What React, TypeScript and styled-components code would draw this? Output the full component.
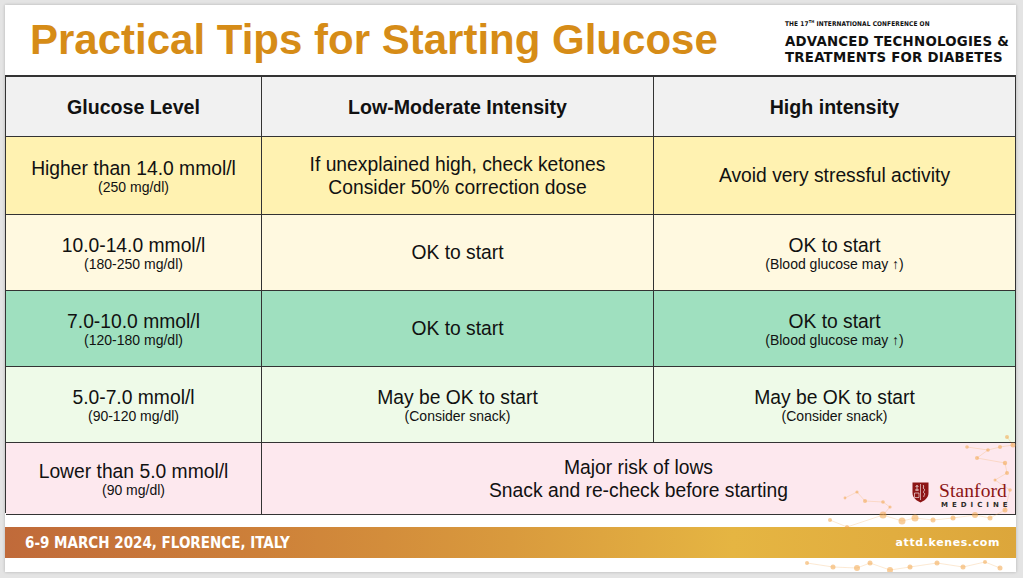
import React from "react";
import styled, { createGlobalStyle } from "styled-components";

const Global = createGlobalStyle`
  html, body { margin: 0; padding: 0; background: #e4e4e4; }
  body { font-family: "Liberation Sans", Arial, sans-serif; }
`;

const Page = styled.div`
  width: 1023px;
  height: 578px;
  padding: 5px 0 0 5px;
  box-sizing: border-box;
  background: #e4e4e4;
`;

const Slide = styled.div`
  position: relative;
  width: 1011px;
  height: 567px;
  background: #ffffff;
  box-shadow: 0 0 3px rgba(0, 0, 0, 0.22);
  display: flex;
  flex-direction: column;
  overflow: hidden;
`;

const Header = styled.div`
  height: 70px;
  display: flex;
  justify-content: space-between;
  align-items: flex-start;
  padding-left: 25px;
  box-sizing: border-box;
`;

const Title = styled.h1`
  margin: 0;
  padding-top: 11px;
  font: 700 42px/48px "Liberation Sans", Arial, sans-serif;
  color: #d68c17;
  letter-spacing: 0;
`;

const Conf = styled.div`
  display: flex;
  flex-direction: column;
  padding-top: 12px;
  margin-right: 9px;
  width: 222px;
  font-family: "DejaVu Sans Condensed", "DejaVu Sans", sans-serif;
  font-stretch: condensed;
  color: #111;
`;

const ConfSmall = styled.div`
  font-size: 6.5px;
  font-weight: 700;
  line-height: 9px;
  letter-spacing: 0.1px;
  margin-bottom: 4px;
`;

const ConfBig = styled.div`
  font-size: 14.8px;
  font-weight: 700;
  line-height: 16px;
  letter-spacing: 0.25px;
  white-space: nowrap;
`;

const Grid = styled.div`
  display: grid;
  grid-template-columns: 256px 392px 1fr;
  grid-template-rows: 60px 78px 76px 76px 76px 72px;
  border-top: 2px solid #333;
  border-left: 1.5px solid #333;
  box-sizing: border-box;
  height: 438px;
`;

const Cell = styled.div<{ $bg: string; $span?: number }>`
  background: ${(p) => p.$bg};
  grid-column: ${(p) => (p.$span ? `span ${p.$span}` : "auto")};
  border-right: 1.5px solid #333;
  border-bottom: 1.5px solid #333;
  display: flex;
  flex-direction: column;
  align-items: center;
  justify-content: center;
  text-align: center;
  color: #111;
  box-sizing: border-box;
`;

const HeadText = styled.div`
  font-size: 19.6px;
  font-weight: 700;
  line-height: 22px;
`;

const Main = styled.div`
  font-size: 19.3px;
  line-height: 23px;
`;

const Sub = styled.div`
  font-size: 14px;
  line-height: 15px;
`;

const Spacer = styled.div`
  height: 14px;
  flex: none;
`;

const Bar = styled.div`
  height: 31px;
  flex: none;
  display: flex;
  align-items: center;
  justify-content: space-between;
  padding: 0 16px 0 20px;
  background: linear-gradient(90deg, #c06a3a 0%, #cd8039 25%, #d99a3d 50%, #e5b542 72%, #e1ad3f 88%, #dca63b 100%);
  color: #fff;
  box-sizing: border-box;
`;

const Dates = styled.div`
  font-family: "DejaVu Sans Condensed", "DejaVu Sans", sans-serif;
  font-stretch: condensed;
  font-weight: 700;
  font-size: 15px;
  letter-spacing: 0;
`;

const Site = styled.div`
  font-family: "DejaVu Sans", sans-serif;
  font-weight: 700;
  font-size: 11px;
  letter-spacing: 0.6px;
`;

const Network = styled.svg`
  position: absolute;
  left: 790px;
  top: 425px;
  width: 221px;
  height: 142px;
  pointer-events: none;
`;

const Stanford = styled.div`
  position: absolute;
  left: 907px;
  top: 477px;
  display: flex;
  align-items: flex-start;
  gap: 10px;
`;

const StanfordText = styled.div`
  display: flex;
  flex-direction: column;
  align-items: flex-start;
`;

const StanfordName = styled.div`
  font-family: "Liberation Serif", "Times New Roman", serif;
  font-size: 19.5px;
  line-height: 18px;
  color: #8c1515;
  letter-spacing: 0.1px;
`;

const Medicine = styled.div`
  font-family: "DejaVu Sans", sans-serif;
  font-size: 7px;
  font-weight: 700;
  letter-spacing: 4px;
  line-height: 9px;
  color: #2e2d29;
  margin-left: 2px;
  margin-top: 1px;
`;

const dots: [number, number, number][] = [
  [1007, 437, 2], [1013, 445, 2.5], [1000, 447, 2], [988, 450, 1.8], [967, 447, 1.8],
  [977, 458, 2], [1005, 463, 2.2], [1007, 473, 2], [857, 492, 1.6], [865, 501, 2],
  [883, 502, 1.8], [890, 507, 1.6], [883, 515, 3.5], [902, 521, 3.5], [915, 518, 3.5],
  [933, 520, 2.5], [953, 518, 2.5], [975, 515, 3], [990, 518, 2.5], [1005, 510, 2.5],
  [830, 520, 2], [847, 527, 2], [807, 563, 2], [833, 567, 2.5], [857, 568, 3],
  [870, 563, 2.5], [890, 570, 3], [910, 567, 2.5], [937, 563, 2.5], [963, 567, 2.5],
  [985, 562, 2], [1000, 568, 2.5], [845, 498, 1.4], [1010, 490, 1.8], [995, 480, 1.5],
];

const links: [number, number][] = [
  [0, 1], [1, 2], [2, 3], [3, 4], [3, 5], [5, 6], [6, 7], [8, 9], [9, 10], [10, 11],
  [11, 12], [12, 13], [13, 14], [14, 15], [15, 16], [16, 17], [17, 18], [18, 19],
  [20, 21], [21, 12], [22, 23], [23, 24], [24, 25], [25, 26], [26, 27], [27, 28],
  [28, 29], [29, 30], [30, 31], [32, 8], [19, 33], [33, 34], [34, 7],
];

const rows = [
  { bg: "#fff2b1", lvl: "Higher than 14.0 mmol/l", mg: "(250 mg/dl)", low: ["If unexplained high, check ketones", "Consider 50% correction dose"], lowSub: "", high: "Avoid very stressful activity", highSub: "" },
  { bg: "#fff9e0", lvl: "10.0-14.0 mmol/l", mg: "(180-250 mg/dl)", low: ["OK to start"], lowSub: "", high: "OK to start", highSub: "(Blood glucose may \u2191)" },
  { bg: "#9fe0bf", lvl: "7.0-10.0 mmol/l", mg: "(120-180 mg/dl)", low: ["OK to start"], lowSub: "", high: "OK to start", highSub: "(Blood glucose may \u2191)" },
  { bg: "#eefae8", lvl: "5.0-7.0 mmol/l", mg: "(90-120 mg/dl)", low: ["May be OK to start"], lowSub: "(Consider snack)", high: "May be OK to start", highSub: "(Consider snack)" },
];

export default function App() {
  return (
    <Page>
      <Global />
      <Slide>
        <Header>
          <Title>Practical Tips for Starting Glucose</Title>
          <Conf>
            <ConfSmall>
              THE 17<sup style={{ fontSize: "4px" }}>TH</sup> INTERNATIONAL CONFERENCE ON
            </ConfSmall>
            <ConfBig>ADVANCED TECHNOLOGIES &amp;</ConfBig>
            <ConfBig>TREATMENTS FOR DIABETES</ConfBig>
          </Conf>
        </Header>
        <Grid>
          <Cell $bg="#f1f1f1"><HeadText>Glucose Level</HeadText></Cell>
          <Cell $bg="#f1f1f1"><HeadText>Low-Moderate Intensity</HeadText></Cell>
          <Cell $bg="#f1f1f1"><HeadText>High intensity</HeadText></Cell>
          {rows.map((r, i) => (
            <React.Fragment key={i}>
              <Cell $bg={r.bg}>
                <Main>{r.lvl}</Main>
                <Sub>{r.mg}</Sub>
              </Cell>
              <Cell $bg={r.bg}>
                {r.low.map((t) => (
                  <Main key={t}>{t}</Main>
                ))}
                {r.lowSub && <Sub>{r.lowSub}</Sub>}
              </Cell>
              <Cell $bg={r.bg}>
                <Main>{r.high}</Main>
                {r.highSub && <Sub>{r.highSub}</Sub>}
              </Cell>
            </React.Fragment>
          ))}
          <Cell $bg="#fde8ee">
            <Main>Lower than 5.0 mmol/l</Main>
            <Sub>(90 mg/dl)</Sub>
          </Cell>
          <Cell $bg="#fde8ee" $span={2}>
            <Main>Major risk of lows</Main>
            <Main>Snack and re-check before starting</Main>
          </Cell>
        </Grid>
        <Spacer />
        <Bar>
          <Dates>6-9 MARCH 2024, FLORENCE, ITALY</Dates>
          <Site>attd.kenes.com</Site>
        </Bar>
        <Network viewBox="795 430 221 142">
          {links.map(([a, b], i) => (
            <line
              key={i}
              x1={dots[a][0]}
              y1={dots[a][1]}
              x2={dots[b][0]}
              y2={dots[b][1]}
              stroke="#f3a64a"
              strokeOpacity={0.35}
              strokeWidth={0.7}
            />
          ))}
          {dots.map(([x, y, r], i) => (
            <circle key={i} cx={x} cy={y} r={r} fill="#f3a64a" fillOpacity={0.55} />
          ))}
        </Network>
        <Stanford>
          <svg width="17" height="21" viewBox="0 0 17 21">
            <path d="M0.5 0.5 H16.5 V11 C16.5 16 12 19 8.5 20.5 C5 19 0.5 16 0.5 11 Z" fill="#8c1515" />
            <path d="M8.5 2 V18" stroke="#fff" strokeWidth="0.6" />
            <path d="M5 3 V9 M3.5 5 L5 3.5 L6.5 5 M3 8 H7" stroke="#fff" strokeWidth="0.7" fill="none" />
            <path d="M11 3 C13 4 10 6 12 7 C14 8 10 10 12 11 C14 12 11 14 12 15" stroke="#fff" strokeWidth="0.7" fill="none" />
            <path d="M2.5 11 H7 V15.5 H2.5 Z" fill="none" stroke="#fff" strokeWidth="0.6" />
          </svg>
          <StanfordText>
            <StanfordName>Stanford</StanfordName>
            <Medicine>MEDICINE</Medicine>
          </StanfordText>
        </Stanford>
      </Slide>
    </Page>
  );
}
